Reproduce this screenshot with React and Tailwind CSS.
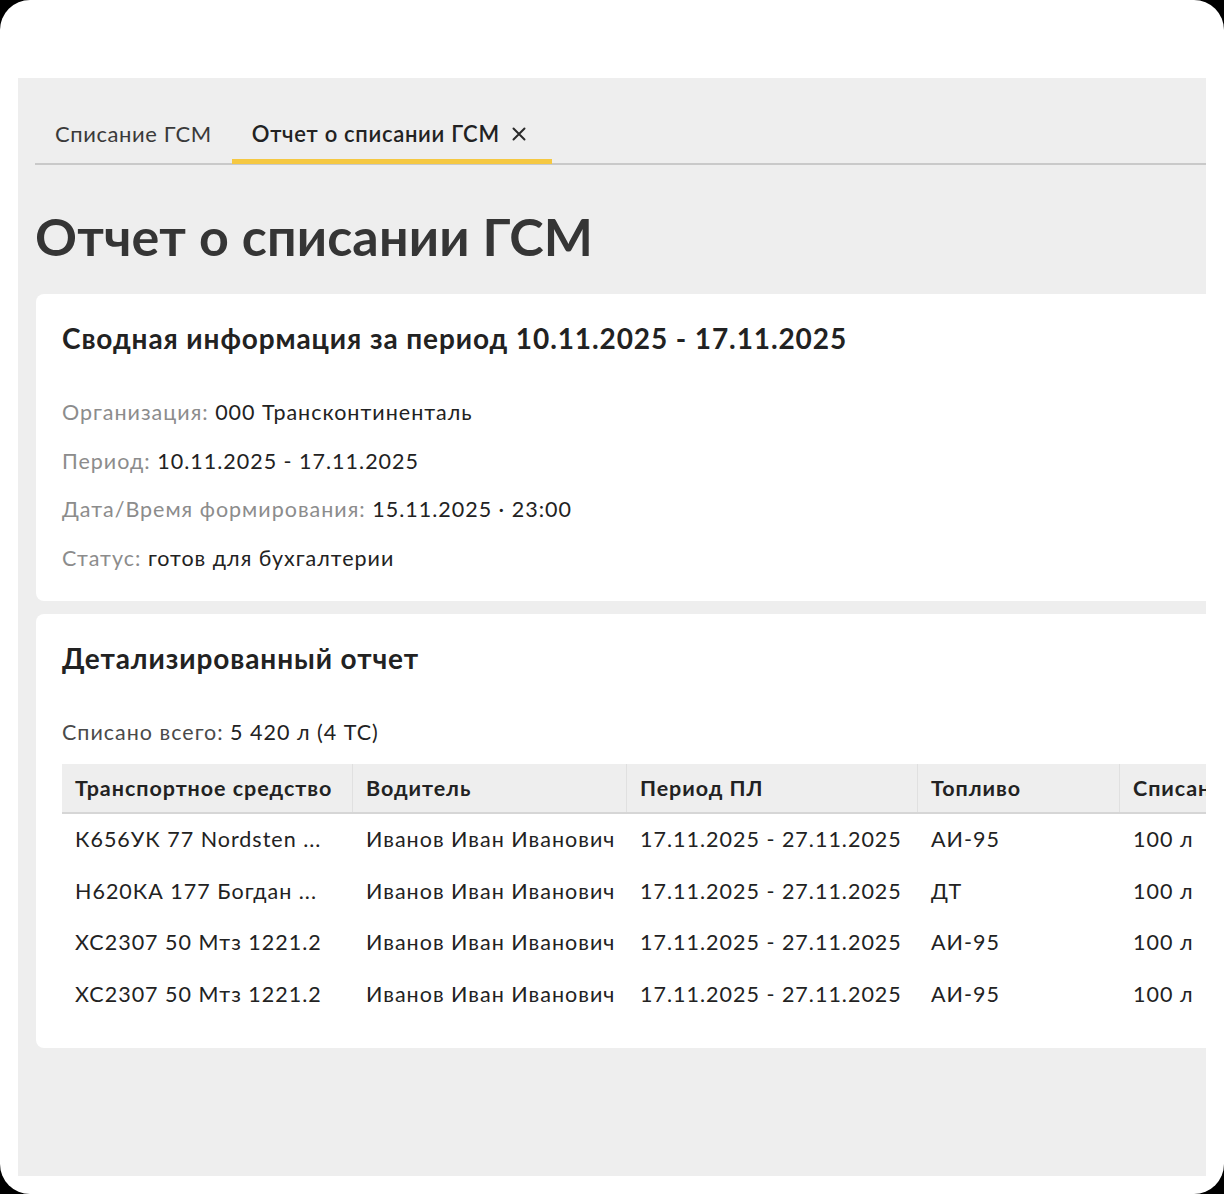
import React from "react";

const rows = [
  ["К656УК 77 Nordsten ...", "Иванов Иван Иванович", "17.11.2025 - 27.11.2025", "АИ-95", "100 л"],
  ["Н620КА 177 Богдан ...", "Иванов Иван Иванович", "17.11.2025 - 27.11.2025", "ДТ", "100 л"],
  ["ХС2307 50 Мтз 1221.2", "Иванов Иван Иванович", "17.11.2025 - 27.11.2025", "АИ-95", "100 л"],
  ["ХС2307 50 Мтз 1221.2", "Иванов Иван Иванович", "17.11.2025 - 27.11.2025", "АИ-95", "100 л"],
];

const cols = ["w-[290px]", "w-[274px]", "w-[291px]", "w-[202px]", "w-[220px]"];
const heads = ["Транспортное средство", "Водитель", "Период ПЛ", "Топливо", "Списано"];

export default function App() {
  return (
    <div className="bg-black w-[1224px] h-[1194px]" style={{ fontFamily: "Lato, 'Noto Sans', sans-serif" }}>
      <div className="w-[1224px] h-[1194px] bg-white rounded-[30px] pt-[78px] px-[18px] pb-[18px]">
        <div className="h-[1098px] bg-[#eeeeee] overflow-hidden pl-[17px] pt-[42px]">
          {/* Tabs */}
          <div className="flex border-b-2 border-[#c9c9c9] w-[1300px]">
            <div className="px-5 pb-[15px] text-[22px] leading-[28px] tracking-[0.6px] text-[#3a3a3a]">Списание ГСМ</div>
            <div className="relative pl-5 pr-[26px] pb-[15px] text-[22px] leading-[28px] tracking-[0.7px] text-[#222] font-semibold flex items-center">
              <span>Отчет о списании ГСМ</span>
              <svg className="ml-[12px]" width="14" height="14" viewBox="0 0 14 14" fill="none" stroke="#2a2a2a" strokeWidth="2" strokeLinecap="round">
                <path d="M1.5 1.5L12.5 12.5M12.5 1.5L1.5 12.5" />
              </svg>
              <span className="absolute left-0 right-0 -bottom-[1px] h-[5px] bg-[#f5c842]"></span>
            </div>
          </div>

          {/* Title */}
          <h1 className="mt-[40px] text-[52px] leading-[62px] font-bold text-[#353535] tracking-[0.15px]">Отчет о списании ГСМ</h1>

          {/* Card 1 */}
          <div className="mt-[27px] ml-[1px] w-[1250px] bg-white rounded-[8px] pl-[26px] pt-[27px] pb-[29px]">
            <h2 className="text-[28px] leading-[34px] tracking-[0.9px] font-bold text-[#222]">Сводная информация за период 10.11.2025 - 17.11.2025</h2>
            <div className="mt-[43px] flex flex-col gap-[20.6px] text-[21.5px] leading-[28px] tracking-[1px] text-[#222]">
              <div><span className="text-[#8c8c8c]">Организация: </span>000 Трансконтиненталь</div>
              <div><span className="text-[#8c8c8c]">Период: </span>10.11.2025 - 17.11.2025</div>
              <div><span className="text-[#8c8c8c]">Дата/Время формирования: </span>15.11.2025 · 23:00</div>
              <div><span className="text-[#8c8c8c]">Статус: </span>готов для бухгалтерии</div>
            </div>
          </div>

          {/* Card 2 */}
          <div className="mt-[13px] ml-[1px] w-[1250px] bg-white rounded-[8px] pl-[26px] pt-[27px] pb-[28px]">
            <h2 className="text-[28px] leading-[34px] tracking-[0.9px] font-bold text-[#222]">Детализированный отчет</h2>
            <div className="mt-[43px] text-[21.5px] leading-[28px] tracking-[1px] text-[#222]">
              <span className="text-[#4a4a4a]">Списано всего: </span>5 420 л (4 ТС)
            </div>
            <div className="mt-[18px] text-[21.5px] tracking-[1px] text-[#222]">
              <div className="flex bg-[#eeeeee] border-b-2 border-[#d6d6d6] h-[50px]">
                {heads.map((h, i) => (
                  <div
                    key={h}
                    className={`${cols[i]} shrink-0 flex items-center pl-[13px] font-bold tracking-[0.95px] whitespace-nowrap ${i > 0 ? "border-l border-[#e0e0e0]" : ""}`}
                  >
                    {h}
                  </div>
                ))}
              </div>
              {rows.map((r, ri) => (
                <div key={ri} className="flex h-[51.5px] items-center">
                  {r.map((c, i) => (
                    <div key={i} className={`${cols[i]} shrink-0 whitespace-nowrap ${i > 0 ? "pl-[14px]" : "pl-[13px]"}`}>
                      {c}
                    </div>
                  ))}
                </div>
              ))}
            </div>
          </div>
        </div>
      </div>
    </div>
  );
}
